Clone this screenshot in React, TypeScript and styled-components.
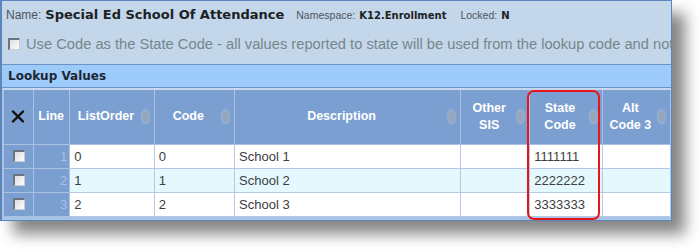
import React from 'react';
import styled, { createGlobalStyle } from 'styled-components';

const GlobalStyle = createGlobalStyle`
  html, body {
    margin: 0;
    padding: 0;
    background: #ffffff;
  }

  body {
    font-family: "Liberation Sans", Arial, sans-serif;
  }
`;

interface Column {
  key: string;
  label: React.ReactNode;
  width: number;
  sortable?: boolean;
}

interface Row {
  line: number;
  listOrder: string;
  code: string;
  description: string;
  otherSis: string;
  stateCode: string;
  altCode: string;
}

const columns: Column[] = [
  { key: 'sel', label: null, width: 30 },
  { key: 'line', label: 'Line', width: 36 },
  { key: 'listOrder', label: 'ListOrder', width: 84, sortable: true },
  { key: 'code', label: 'Code', width: 80, sortable: true },
  { key: 'description', label: 'Description', width: 225, sortable: true },
  { key: 'otherSis', label: <>Other<br />SIS</>, width: 69, sortable: true },
  { key: 'stateCode', label: <>State<br />Code</>, width: 72, sortable: true },
  { key: 'altCode', label: <>Alt<br />Code 3</>, width: 68, sortable: true }
];

const rows: Row[] = [
  { line: 1, listOrder: '0', code: '0', description: 'School 1', otherSis: '', stateCode: '1111111', altCode: '' },
  { line: 2, listOrder: '1', code: '1', description: 'School 2', otherSis: '', stateCode: '2222222', altCode: '' },
  { line: 3, listOrder: '2', code: '2', description: 'School 3', otherSis: '', stateCode: '3333333', altCode: '' }
];

const Page = styled.div`
  padding: 0;
  width: 700px;
  height: 251px;
  overflow: hidden;
`;

const Panel = styled.div`
  position: relative;
  width: 672px;
  box-sizing: border-box;
  border: 1px solid #5b86bb;
  border-left-width: 2px;
  background: #a9c3e3;
  box-shadow: 13px 13px 14px rgba(0, 0, 0, 0.48);
  padding-bottom: 3px;
`;

const Info = styled.div`
  background: #c3d6ea;
  height: 64px;
  box-sizing: border-box;
  padding: 6px 4px 0 4px;
  border-bottom: 1px solid #6c93c4;
  overflow: hidden;
  white-space: nowrap;
`;

const NameRow = styled.div`
  display: flex;
  align-items: baseline;
  height: 22px;
`;

const Label = styled.span<{ $size?: number }>`
  color: #4e5560;
  font-size: ${({ $size }) => $size ?? 12}px;
  margin-right: 4px;
`;

const Strong = styled.span<{ $size?: number; $gap?: number }>`
  font-family: "DejaVu Sans", Verdana, sans-serif;
  font-weight: bold;
  color: #1c1f24;
  font-size: ${({ $size }) => $size ?? 12}px;
  margin-right: ${({ $gap }) => $gap ?? 0}px;
`;

const CheckRow = styled.label`
  display: flex;
  align-items: center;
  height: 30px;
  padding-left: 2px;
  color: #76878a;
  font-size: 14.7px;
`;

const Box = styled.span`
  display: inline-block;
  width: 12px;
  height: 12px;
  box-sizing: border-box;
  border: 1px solid #c9ced4;
  border-top: 2px solid #6b7580;
  border-left: 2px solid #6b7580;
  background: linear-gradient(135deg, #dcdcdc, #ffffff);
  margin-right: 6px;
  flex: none;
`;

const Bar = styled.div`
  height: 23px;
  box-sizing: border-box;
  background: #9dcbf9;
  border-bottom: 1px solid #6c93c4;
  padding: 4px 0 0 6px;
  font-family: "DejaVu Sans", Verdana, sans-serif;
  font-weight: bold;
  font-size: 12px;
  color: #1d2633;
`;

const Grid = styled.table`
  border-collapse: collapse;
  table-layout: fixed;
  width: 668px;
  margin-left: 1px;
`;

const HeadCell = styled.th`
  height: 55px;
  box-sizing: border-box;
  background: #7b9fd0;
  border: 1px solid #a9c2e3;
  border-top: 2px solid #c7d8ee;
  color: #ffffff;
  font-size: 12.5px;
  font-weight: bold;
  line-height: 17px;
  padding: 0 3px 0 2px;
  vertical-align: middle;
`;

const HeadInner = styled.div<{ $sortable?: boolean }>`
  display: flex;
  align-items: center;
  justify-content: ${({ $sortable }) => ($sortable ? 'space-between' : 'center')};
`;

const HeadText = styled.span`
  flex: 1;
  text-align: center;
`;

const BodyRow = styled.tr<{ $alt: boolean }>`
  background: ${({ $alt }) => ($alt ? '#e5f8fd' : '#ffffff')};
`;

const Cell = styled.td`
  height: 24px;
  box-sizing: border-box;
  border: 1px solid #b4c9e5;
  padding: 0 4px;
  font-size: 13px;
  color: #3b3e42;
  white-space: nowrap;
  overflow: hidden;
`;

const SideCell = styled(Cell)<{ $right?: boolean }>`
  background: #7b9fd0;
  border-color: #a9c2e3;
  text-align: ${({ $right }) => ($right ? 'right' : 'center')};
  color: #a9c0e4;
  padding: 0 2px;
`;

const RowBox = styled(Box)`
  margin: 3px 0 0 0;
`;

const Highlight = styled.div`
  position: absolute;
  left: 525px;
  top: 89px;
  width: 73px;
  height: 130px;
  box-sizing: border-box;
  border: 2px solid #e8141b;
  border-radius: 7px;
  pointer-events: none;
`;

function SortIcon (): React.ReactElement {
  return (
    <svg width='11' height='17' viewBox='0 0 11 17' style={{ flex: 'none' }}>
      <ellipse cx='5.5' cy='8.5' rx='5' ry='8' fill='#91abd1' />
      <path d='M2 7.5 L5.5 3 L9 7.5 Z' fill='#9aa3ae' />
      <path d='M2 9.5 L5.5 14 L9 9.5 Z' fill='#9aa3ae' />
    </svg>
  );
}

function DeleteIcon (): React.ReactElement {
  return (
    <svg width='14' height='13' viewBox='0 0 14 13'>
      <path d='M2 1.5 L12 11.5 M12 1.5 L2 11.5' stroke='#111' strokeWidth='2.4' strokeLinecap='round' />
    </svg>
  );
}

function LookupGrid (): React.ReactElement {
  return (
    <Grid>
      <colgroup>
        {columns.map((c) => <col key={c.key} style={{ width: c.width }} />)}
      </colgroup>
      <thead>
        <tr>
          {columns.map((c) => (
            <HeadCell key={c.key}>
              <HeadInner $sortable={c.sortable}>
                {c.key === 'sel' ? <DeleteIcon /> : <HeadText>{c.label}</HeadText>}
                {c.sortable && <SortIcon />}
              </HeadInner>
            </HeadCell>
          ))}
        </tr>
      </thead>
      <tbody>
        {rows.map((r, i) => (
          <BodyRow $alt={i % 2 === 1} key={r.line}>
            <SideCell><RowBox /></SideCell>
            <SideCell $right>{r.line}</SideCell>
            <Cell>{r.listOrder}</Cell>
            <Cell>{r.code}</Cell>
            <Cell>{r.description}</Cell>
            <Cell>{r.otherSis}</Cell>
            <Cell>{r.stateCode}</Cell>
            <Cell>{r.altCode}</Cell>
          </BodyRow>
        ))}
      </tbody>
    </Grid>
  );
}

export default function App (): React.ReactElement {
  return (
    <Page>
      <GlobalStyle />
      <Panel>
        <Info>
          <NameRow>
            <Label>Name:</Label>
            <Strong $size={13} $gap={12}>Special Ed School Of Attendance</Strong>
            <Label $size={10.5}>Namespace:</Label>
            <Strong $size={10} $gap={14}>K12.Enrollment</Strong>
            <Label $size={10.5}>Locked:</Label>
            <Strong $size={10}>N</Strong>
          </NameRow>
          <CheckRow>
            <Box />
            Use Code as the State Code - all values reported to state will be used from the lookup code and not
          </CheckRow>
        </Info>
        <Bar>Lookup Values</Bar>
        <LookupGrid />
        <Highlight />
      </Panel>
    </Page>
  );
}
